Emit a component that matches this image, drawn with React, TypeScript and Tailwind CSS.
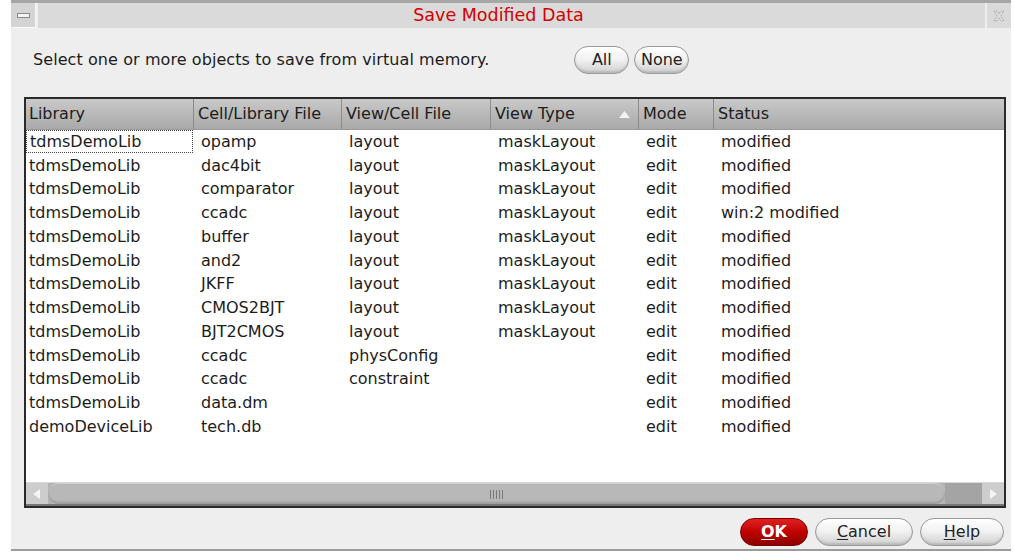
import React from 'react';

const rows = [
  ['tdmsDemoLib', 'opamp', 'layout', 'maskLayout', 'edit', 'modified'],
  ['tdmsDemoLib', 'dac4bit', 'layout', 'maskLayout', 'edit', 'modified'],
  ['tdmsDemoLib', 'comparator', 'layout', 'maskLayout', 'edit', 'modified'],
  ['tdmsDemoLib', 'ccadc', 'layout', 'maskLayout', 'edit', 'win:2 modified'],
  ['tdmsDemoLib', 'buffer', 'layout', 'maskLayout', 'edit', 'modified'],
  ['tdmsDemoLib', 'and2', 'layout', 'maskLayout', 'edit', 'modified'],
  ['tdmsDemoLib', 'JKFF', 'layout', 'maskLayout', 'edit', 'modified'],
  ['tdmsDemoLib', 'CMOS2BJT', 'layout', 'maskLayout', 'edit', 'modified'],
  ['tdmsDemoLib', 'BJT2CMOS', 'layout', 'maskLayout', 'edit', 'modified'],
  ['tdmsDemoLib', 'ccadc', 'physConfig', '', 'edit', 'modified'],
  ['tdmsDemoLib', 'ccadc', 'constraint', '', 'edit', 'modified'],
  ['tdmsDemoLib', 'data.dm', '', '', 'edit', 'modified'],
  ['demoDeviceLib', 'tech.db', '', '', 'edit', 'modified'],
];

const cols = [
  { label: 'Library', w: 'w-[167px]' },
  { label: 'Cell/Library File', w: 'w-[148px]' },
  { label: 'View/Cell File', w: 'w-[149px]' },
  { label: 'View Type', w: 'w-[148px]', sort: true },
  { label: 'Mode', w: 'w-[75px]' },
  { label: 'Status', w: 'flex-1' },
];

const font = { fontFamily: '"DejaVu Sans", sans-serif' };

function PillButton({ children, className = '' }: { children: React.ReactNode; className?: string }) {
  return (
    <button
      className={`h-[28px] rounded-full border border-[#9a9a9a] bg-gradient-to-b from-[#ffffff] via-[#f0f0f0] to-[#cfcfcf] text-[16px] text-[#222] shadow-[inset_0_-2px_2px_rgba(0,0,0,0.12)] ${className}`}
    >
      {children}
    </button>
  );
}

export default function App() {
  return (
    <div className="w-[1014px] h-[558px] bg-white text-[#1c1c1c]" style={font}>
      <div className="ml-[11px] w-[1000px] h-[551px] border-t-[3px] border-[#a6a6a6] bg-[#eeeeee] flex flex-col border-b-2 border-b-[#9c9c9c]">
        {/* title bar */}
        <div className="h-[25px] flex gap-[2px] bg-[#eeeeee]">
          <div className="w-[25px] h-[25px] bg-[#d4d4d4] border-r border-b border-[#f8f8f8] flex items-center justify-center">
            <div className="w-[13px] h-[5px] border border-[#8a8a8a] bg-[#f4f4f4]" />
          </div>
          <div className="flex-1 h-[25px] bg-[#dadada] flex items-center justify-center pr-[26px] text-[17.5px] text-[#d40000]">
            Save Modified Data
          </div>
          <div className="w-[24px] h-[25px] bg-[#dadada] flex items-center justify-center">
            <svg width="14" height="14" viewBox="0 0 14 14" fill="none" stroke="#a4a4a4" strokeWidth="1" strokeDasharray="1 1">
              <path d="M2 2 L5 2 L7 5 L9 2 L12 2 L9 7 L12 12 L9 12 L7 9 L5 12 L2 12 L5 7 Z" />
            </svg>
          </div>
        </div>

        {/* instructions */}
        <div className="flex items-center mt-[17px] h-[30px]">
          <div className="ml-[22px] text-[16px] tracking-[0.08px]">Select one or more objects to save from virtual memory.</div>
          <PillButton className="ml-[85px] w-[55px]">All</PillButton>
          <PillButton className="ml-[5px] w-[55px]">None</PillButton>
        </div>

        {/* table */}
        <div className="mt-[22px] ml-[13px] w-[982px] h-[411px] border-2 border-[#2a2a2a] bg-white flex flex-col">
          <div className="h-[31px] flex bg-gradient-to-b from-[#c9c9c9] to-[#a9a9a9] text-[16px] border-b border-[#9a9a9a]">
            {cols.map((c, i) => (
              <div
                key={c.label}
                className={`${c.w} flex items-center pl-[3px] pr-[8px] ${i > 0 ? 'border-l border-[#8c8c8c] pl-[4px]' : ''}`}
              >
                <span className="flex-1 whitespace-nowrap">{c.label}</span>
                {c.sort && (
                  <svg width="11" height="7" viewBox="0 0 11 7">
                    <path d="M0 7 L5.5 0 L11 7 Z" fill="#f2f2f2" />
                  </svg>
                )}
              </div>
            ))}
          </div>
          <div className="flex-1 text-[16px]">
            {rows.map((r, ri) => (
              <div key={ri} className="h-[23.75px] flex items-center">
                {r.map((cell, ci) => (
                  <div key={ci} className={`${cols[ci].w} h-full flex items-center`}>
                    <span
                      className={`whitespace-nowrap ${ci === 0 ? 'pl-[3px]' : 'pl-[8px]'} ${
                        ri === 0 && ci === 0 ? 'border border-dotted border-[#444] w-full h-[23px] flex items-center' : ''
                      }`}
                    >
                      {cell}
                    </span>
                  </div>
                ))}
              </div>
            ))}
          </div>
          {/* horizontal scrollbar */}
          <div className="h-[24px] flex bg-[#b4b4b4] border-t border-[#d8d8d8] border-b-2 border-b-[#777]">
            <div className="w-[22px] flex items-center justify-center bg-[#cdcdcd]">
              <svg width="8" height="10" viewBox="0 0 8 10"><path d="M7 0 L0 5 L7 10 Z" fill="#f4f4f4" /></svg>
            </div>
            <div className="w-[897px] rounded-[10px] bg-[#b8b8b8] border-t border-[#d0d0d0] shadow-[inset_0_-2px_2px_rgba(0,0,0,0.15)] flex items-center justify-center">
              <div className="flex gap-[2px]">
                {[0, 1, 2, 3, 4].map(i => (
                  <div key={i} className="w-px h-[9px] bg-[#7a7a7a]" />
                ))}
              </div>
            </div>
            <div className="flex-1 bg-[#a4a4a4]" />
            <div className="w-[22px] flex items-center justify-center bg-[#cdcdcd]">
              <svg width="8" height="10" viewBox="0 0 8 10"><path d="M1 0 L8 5 L1 10 Z" fill="#f4f4f4" /></svg>
            </div>
          </div>
        </div>

        {/* bottom buttons */}
        <div className="flex justify-end mt-[10px] mr-[7px] gap-[7px]">
          <button className="w-[68px] h-[28px] rounded-full bg-gradient-to-b from-[#e02020] via-[#c00000] to-[#8c0000] border border-[#7a0000] text-white font-bold text-[16px]">
            <span className="underline underline-offset-2">O</span>K
          </button>
          <PillButton className="w-[98px]">
            <span className="underline underline-offset-2">C</span>ancel
          </PillButton>
          <PillButton className="w-[84px]">
            <span className="underline underline-offset-2">H</span>elp
          </PillButton>
        </div>
      </div>
    </div>
  );
}
